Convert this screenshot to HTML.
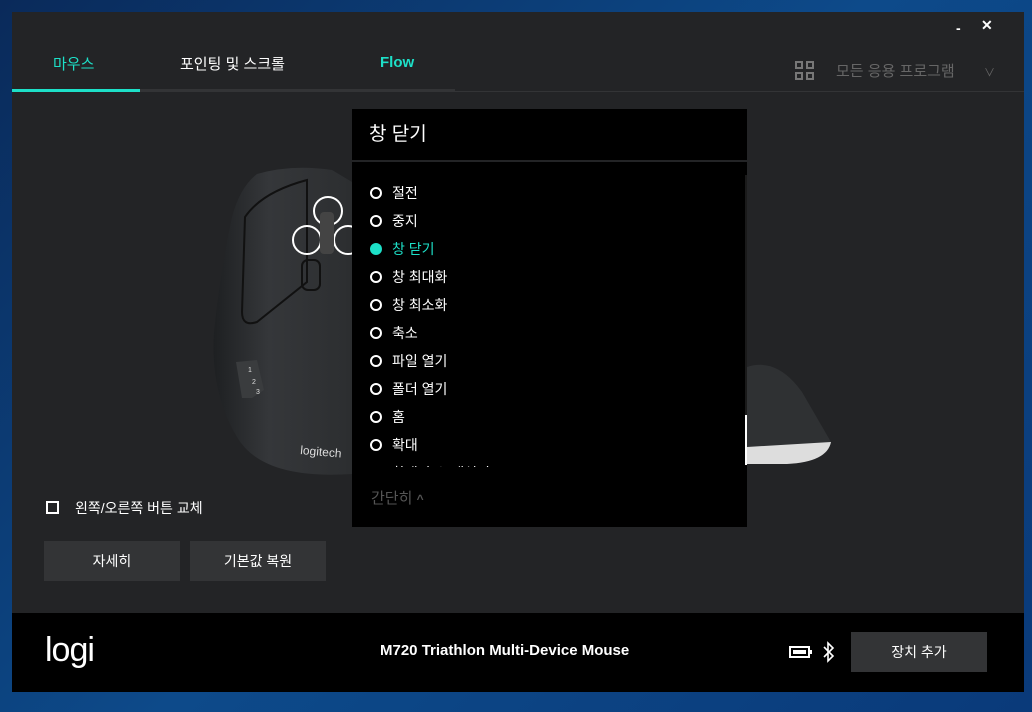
<!DOCTYPE html>
<html><head><meta charset="utf-8"><style>
*{margin:0;padding:0;box-sizing:border-box}
body{width:1032px;height:712px;overflow:hidden;background:linear-gradient(135deg,#0a2a5a 0%,#0d4a8a 50%,#0a3a7a 100%);font-family:"Liberation Sans","Noto Sans CJK KR",sans-serif;position:relative}
.win{position:absolute;left:12px;top:12px;width:1012px;height:680px;background:#232426}
.t{position:absolute;color:#fff;white-space:nowrap}
.bar{position:absolute;left:0;top:601px;width:1012px;height:79px;background:#000}
.btn{position:absolute;background:#333436;color:#fff;font-size:14px;text-align:center;line-height:40px}
.panel{position:absolute;left:340px;top:97px;width:395px;height:418px;background:#000}
.item{position:absolute;left:18px;font-size:14px;color:#fff;height:20px;line-height:20px}
.item i{display:inline-block;width:12px;height:12px;border:2px solid #fff;border-radius:50%;margin-right:10px;vertical-align:-1px}
</style></head><body>
<div class="win">
<div class="t" style="left:944px;top:8px;font-size:14px;font-weight:bold">-</div>
<div class="t" style="left:969px;top:5px;font-size:14px;font-weight:bold">✕</div>
<div class="t" style="left:41px;top:41px;font-size:15px;color:#1de0c8">마우스</div>
<div class="t" style="left:168px;top:41px;font-size:15px">포인팅 및 스크롤</div>
<div class="t" style="left:368px;top:42px;font-size:15px;color:#1de0c8;font-weight:bold">Flow</div>
<div style="position:absolute;left:0;top:77px;width:128px;height:3px;background:#1de0c8"></div>
<div style="position:absolute;left:128px;top:77px;width:315px;height:3px;background:#333436"></div>
<div style="position:absolute;left:443px;top:79px;width:569px;height:1px;background:#333436"></div>
<svg style="position:absolute;left:783px;top:49px" width="20" height="20"><g fill="none" stroke="#777" stroke-width="2"><rect x="1" y="1" width="6" height="6"/><rect x="12" y="1" width="6" height="6"/><rect x="1" y="12" width="6" height="6"/><rect x="12" y="12" width="6" height="6"/></g></svg>
<div class="t" style="left:824px;top:48px;font-size:15px;color:#666">모든 응용 프로그램</div>
<div class="t" style="left:972px;top:52px;font-size:11px;color:#666">∨</div>
<!-- mouse -->
<svg style="position:absolute;left:190px;top:150px" width="160" height="320">
<defs><linearGradient id="g" x1="0" y1="0" x2="1" y2="0"><stop offset="0" stop-color="#1e2022"/><stop offset="0.4" stop-color="#35373a"/><stop offset="1" stop-color="#2c2e30"/></linearGradient></defs>
<path d="M55 12 Q90 2 130 8 L150 20 L150 312 Q60 318 35 275 Q8 230 12 170 Q18 110 30 55 Q38 25 55 12Z" fill="url(#g)"/>
<path d="M43 55 Q60 30 105 18 L105 120 L55 160 Q40 165 40 150Z" fill="none" stroke="#111" stroke-width="2"/>
<rect x="100" y="98" width="18" height="30" rx="6" fill="none" stroke="#111" stroke-width="2"/>
<path d="M34 200 L55 198 L62 228 L50 236 L40 236Z" fill="#3a3c3e"/>
<text x="46" y="210" font-size="7" fill="#ddd">1</text><text x="50" y="222" font-size="7" fill="#ddd">2</text><text x="54" y="232" font-size="7" fill="#ddd">3</text>
<text x="98" y="292" font-size="12" fill="#ddd" transform="rotate(5 98 292)">logitech</text>
<circle cx="126" cy="49" r="14" fill="none" stroke="#fff" stroke-width="2"/>
<circle cx="105" cy="78" r="14" fill="none" stroke="#fff" stroke-width="2"/>
<circle cx="146" cy="78" r="14" fill="none" stroke="#fff" stroke-width="2"/>
<rect x="118" y="50" width="14" height="42" rx="4" fill="#444"/>
</svg>
<svg style="position:absolute;left:735px;top:340px" width="90" height="120">
<path d="M0 15 Q30 5 55 40 L84 90 Q80 110 40 112 L0 112Z" fill="#2f3133"/>
<path d="M0 95 L84 90 Q80 110 40 112 L0 112Z" fill="#ddd"/>
</svg>
<div class="panel">
<div class="t" style="left:17px;top:10px;font-size:19px">창 닫기</div>
<div style="position:absolute;left:0;top:51px;width:395px;height:2px;background:#232426"></div>
<div style="position:absolute;left:393px;top:66px;width:2px;height:290px;background:#1a1a1a"></div>
<div style="position:absolute;left:393px;top:306px;width:2px;height:50px;background:#fff"></div>
<div style="position:absolute;left:0;top:70px;width:390px;height:288px;overflow:hidden">
<div class="item" style="top:4px"><i></i>절전</div>
<div class="item" style="top:32px"><i></i>중지</div>
<div class="item" style="top:60px;color:#1de0c8"><i style="background:#1de0c8;border-color:#1de0c8"></i>창 닫기</div>
<div class="item" style="top:88px"><i></i>창 최대화</div>
<div class="item" style="top:116px"><i></i>창 최소화</div>
<div class="item" style="top:144px"><i></i>축소</div>
<div class="item" style="top:172px"><i></i>파일 열기</div>
<div class="item" style="top:200px"><i></i>폴더 열기</div>
<div class="item" style="top:228px"><i></i>홈</div>
<div class="item" style="top:256px"><i></i>확대</div>
<div class="item" style="top:284px"><i></i>확대/축소 재설정</div>
</div>
<div class="t" style="left:19px;top:378px;font-size:15px;color:#555">간단히 <b style="font-size:12px">^</b></div>
</div>
<div style="position:absolute;left:34px;top:489px;width:13px;height:13px;border:2px solid #fff"></div>
<div class="t" style="left:63px;top:486px;font-size:14px">왼쪽/오른쪽 버튼 교체</div>
<div class="btn" style="left:32px;top:529px;width:136px;height:40px">자세히</div>
<div class="btn" style="left:178px;top:529px;width:136px;height:40px">기본값 복원</div>
<div class="bar">
<div class="t" style="left:33px;top:18px;font-size:34px;letter-spacing:-1px">logi</div>
<div class="t" style="left:368px;top:29px;font-size:15px;font-weight:bold">M720 Triathlon Multi-Device Mouse</div>
<svg style="position:absolute;left:777px;top:32px" width="24" height="14"><rect x="1" y="2" width="19" height="10" fill="none" stroke="#fff" stroke-width="2"/><rect x="4" y="5" width="13" height="4" fill="#fff"/><rect x="21" y="5" width="2" height="4" fill="#fff"/></svg>
<svg style="position:absolute;left:810px;top:28px" width="14" height="22"><path d="M2 6 L11 15 L6 20 L6 2 L11 7 L2 16" fill="none" stroke="#fff" stroke-width="1.6"/></svg>
<div class="btn" style="left:839px;top:19px;width:136px;height:40px">장치 추가</div>
</div>
</div>
</body></html>
